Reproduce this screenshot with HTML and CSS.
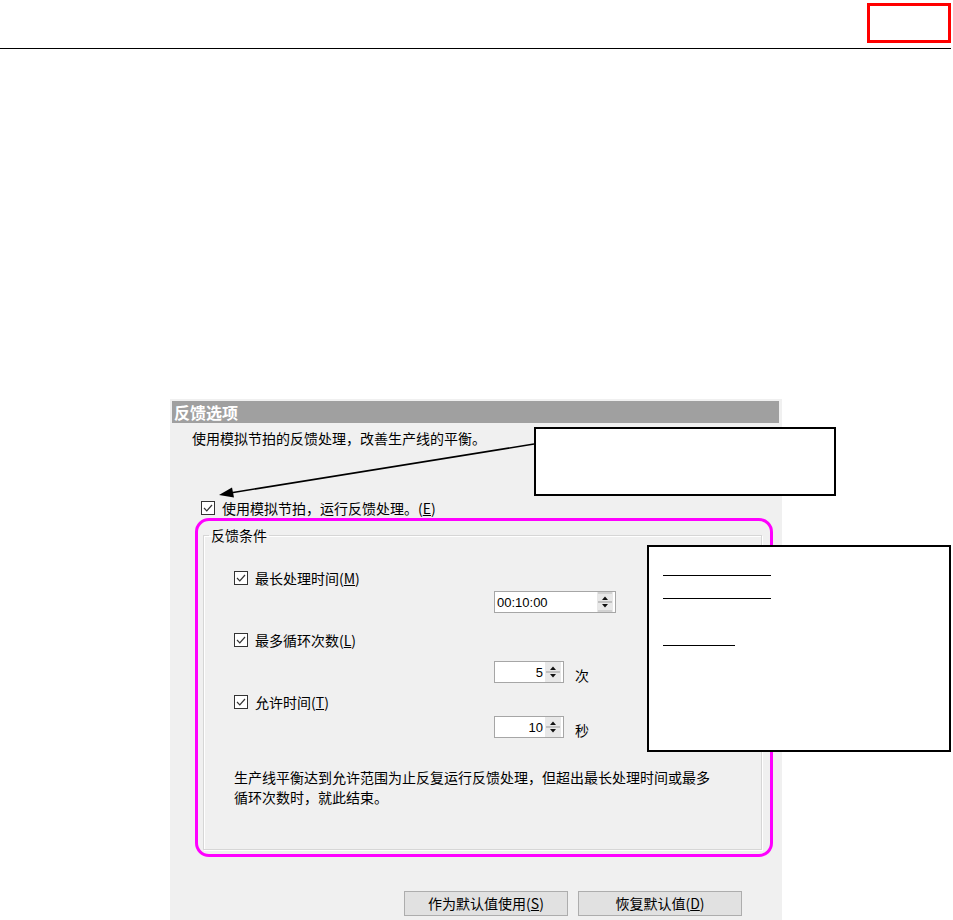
FILE: index.html
```
<!DOCTYPE html>
<html lang="zh-CN">
<head>
    <meta charset="UTF-8">
    <title>反馈选项</title>
    <link rel="stylesheet" href="styles.css">
</head>
<body>
<div class="page">

    <div class="topbar">
        <div class="tag"></div>
    </div>

    <div class="dialog">
        <div class="titlebar">反馈选项</div>
        <p class="desc">使用模拟节拍的反馈处理，改善生产线的平衡。</p>

        <div class="check main-check">
            <svg class="box" width="14" height="14" viewBox="0 0 14 14"><rect x="0.5" y="0.5" width="13" height="13" fill="#fff" stroke="#333"/><path d="M3 7 L5.8 9.8 L11 4" fill="none" stroke="#333" stroke-width="1.2"/></svg>
            <span>使用模拟节拍，运行反馈处理。(<u>E</u>)</span>
        </div>

        <fieldset class="group">
            <legend>反馈条件</legend>

            <div class="check opt first">
                <svg class="box" width="14" height="14" viewBox="0 0 14 14"><rect x="0.5" y="0.5" width="13" height="13" fill="#fff" stroke="#333"/><path d="M3 7 L5.8 9.8 L11 4" fill="none" stroke="#333" stroke-width="1.2"/></svg>
                <span>最长处理时间(<u>M</u>)</span>
            </div>
            <div class="field-row r1">
                <div class="spin wide">
                    <span class="val left">00:10:00</span>
                    <svg class="arrows" width="16" height="20" viewBox="0 0 16 20"><rect x="0" y="0" width="16" height="20" fill="#e8e8e8"/><line x1="1" y1="10" x2="15" y2="10" stroke="#999"/><line x1="1" y1="1" x2="15" y2="1" stroke="#bbb"/><line x1="1" y1="19" x2="15" y2="19" stroke="#bbb"/><path d="M5 8 L8 4.5 L11 8 Z" fill="#111"/><path d="M5 12 L8 15.5 L11 12 Z" fill="#111"/></svg>
                </div>
            </div>

            <div class="check opt second">
                <svg class="box" width="14" height="14" viewBox="0 0 14 14"><rect x="0.5" y="0.5" width="13" height="13" fill="#fff" stroke="#333"/><path d="M3 7 L5.8 9.8 L11 4" fill="none" stroke="#333" stroke-width="1.2"/></svg>
                <span>最多循环次数(<u>L</u>)</span>
            </div>
            <div class="field-row r2">
                <div class="spin small">
                    <span class="val">5</span>
                    <svg class="arrows" width="16" height="20" viewBox="0 0 16 20"><rect x="0" y="0" width="16" height="20" fill="#e8e8e8"/><line x1="1" y1="10" x2="15" y2="10" stroke="#999"/><path d="M5 8 L8 4.5 L11 8 Z" fill="#111"/><path d="M5 12 L8 15.5 L11 12 Z" fill="#111"/></svg>
                </div>
                <span class="unit">次</span>
            </div>

            <div class="check opt third">
                <svg class="box" width="14" height="14" viewBox="0 0 14 14"><rect x="0.5" y="0.5" width="13" height="13" fill="#fff" stroke="#333"/><path d="M3 7 L5.8 9.8 L11 4" fill="none" stroke="#333" stroke-width="1.2"/></svg>
                <span>允许时间(<u>T</u>)</span>
            </div>
            <div class="field-row r3">
                <div class="spin small">
                    <span class="val">10</span>
                    <svg class="arrows" width="16" height="20" viewBox="0 0 16 20"><rect x="0" y="0" width="16" height="20" fill="#e8e8e8"/><line x1="1" y1="10" x2="15" y2="10" stroke="#999"/><path d="M5 8 L8 4.5 L11 8 Z" fill="#111"/><path d="M5 12 L8 15.5 L11 12 Z" fill="#111"/></svg>
                </div>
                <span class="unit">秒</span>
            </div>

            <p class="note">生产线平衡达到允许范围为止反复运行反馈处理，但超出最长处理时间或最多<br>循环次数时，就此结束。</p>
        </fieldset>

        <div class="buttons">
            <div class="btn">作为默认值使用(<u>S</u>)</div>
            <div class="btn">恢复默认值(<u>D</u>)</div>
        </div>
    </div>

    <!-- annotations drawn over the dialog -->
    <div class="highlight"></div>
    <div class="callout callout-top"></div>
    <div class="callout callout-side">
        <span class="blank long"></span>
        <span class="blank long"></span>
        <span class="blank short"></span>
    </div>
    <svg class="arrow" width="953" height="920" viewBox="0 0 953 920">
        <line x1="534" y1="444" x2="230" y2="493" stroke="#000" stroke-width="1.5"/>
        <path d="M219 495 L232 487.5 L234 497.5 Z" fill="#000"/>
    </svg>

</div>
</body>
</html>
```

FILE: styles.css
```
html, body {
    margin: 0;
    padding: 0;
    background: #fff;
    overflow: hidden;
}
.page {
    position: relative;
    width: 953px;
    height: 920px;
    font-family: "Noto Sans CJK SC", "Liberation Sans", sans-serif;
    font-size: 14px;
    color: #000;
}

.topbar {
    height: 48px;
    margin-right: 2px;
    border-bottom: 1px solid #000;
    display: flex;
    justify-content: flex-end;
}
.tag {
    width: 78px;
    height: 34px;
    margin-top: 3px;
    border: 3px solid #ff0000;
}

.dialog {
    width: 612px;
    height: 521px;
    margin: 350px 0 0 170px;
    background: #f0f0f0;
    overflow: hidden;
}
.titlebar {
    height: 22px;
    margin: 2px 3px 0 2px;
    padding-left: 2px;
    background: #a0a0a0;
    color: #fff;
    font-weight: bold;
    font-size: 16px;
    line-height: 22px;
}
.desc {
    margin: 7px 0 0 22px;
    line-height: 16px;
}

.check {
    display: flex;
    align-items: center;
    height: 16px;
    line-height: 16px;
}
.check .box {
    flex: none;
    margin-right: 7px;
}
.main-check {
    margin: 54px 0 0 31px;
}

.group {
    margin: 11px 0 0 33px;
    width: 559px;
    box-sizing: border-box;
    padding: 0 0 42px 0;
    border: 1px solid #d6d6d6;
    box-shadow: inset 1px 1px 0 #fff, 1px 1px 0 #fff;
    min-width: 0;
}
.group legend {
    margin-left: 5px;
    padding: 0 2px;
    line-height: 16px;
}
.opt {
    margin-left: 30px;
}
.opt.first { margin-top: 27px; }
.opt.second { margin-top: 19px; }
.opt.third { margin-top: 11px; }

.field-row {
    display: flex;
    align-items: center;
    margin-left: 290px;
}
.field-row.r1 { margin-top: 5px; }
.field-row.r2 { margin-top: 13px; }
.field-row.r3 { margin-top: 6px; }

.spin {
    display: flex;
    align-items: center;
    height: 22px;
    box-sizing: border-box;
    border: 1px solid #a6a6a6;
    background: #fff;
    font-family: "Liberation Sans", sans-serif;
    font-size: 13px;
}
.spin.wide { width: 122px; }
.spin.small { width: 70px; }
.spin .val {
    flex: 1;
    text-align: right;
    padding-right: 2px;
}
.spin .val.left {
    text-align: left;
    padding-left: 2px;
}
.spin .arrows {
    flex: none;
    margin-right: 2px;
}
.unit {
    margin-left: 11px;
    line-height: 16px;
    padding-top: 6px;
}

.note {
    margin: 29px 0 0 30px;
    line-height: 20px;
}

.buttons {
    display: flex;
    gap: 10px;
    margin: 41px 0 0 234px;
}
.btn {
    width: 164px;
    height: 25px;
    box-sizing: border-box;
    border: 1px solid #adadad;
    background: #e1e1e1;
    text-align: center;
    line-height: 23px;
}

/* annotation layer */
.highlight {
    position: absolute;
    left: 195px;
    top: 518px;
    width: 572px;
    height: 333px;
    border: 3px solid #ff00ff;
    border-radius: 14px;
}
.callout {
    position: absolute;
    background: #fff;
    border: 2px solid #000;
    box-sizing: border-box;
}
.callout-top {
    left: 534px;
    top: 427px;
    width: 302px;
    height: 69px;
}
.callout-side {
    left: 647px;
    top: 545px;
    width: 304px;
    height: 207px;
    padding: 28px 0 0 14px;
}
.blank {
    display: block;
    height: 0;
    border-bottom: 1px solid #000;
    margin-bottom: 22px;
}
.blank.long { width: 108px; }
.blank.short { width: 72px; margin-top: 46px; }
.arrow {
    position: absolute;
    left: 0;
    top: 0;
}
```
